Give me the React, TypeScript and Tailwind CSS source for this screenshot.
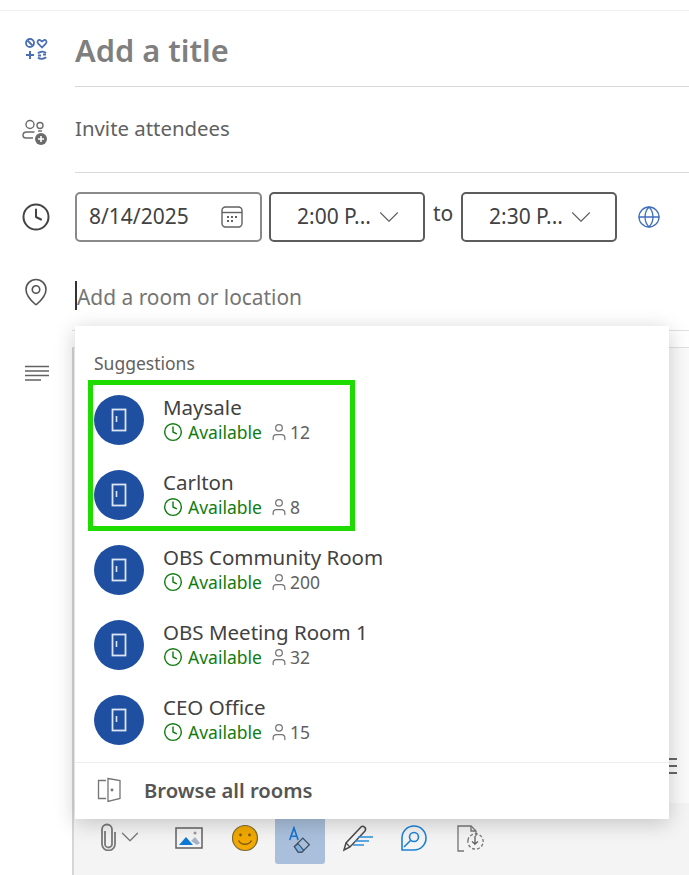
import { ChevronDown, Clock, Globe, MapPin, User } from 'lucide-react';

const rooms = [
  { name: 'Maysale', seats: 12 },
  { name: 'Carlton', seats: 8 },
  { name: 'OBS Community Room', seats: 200 },
  { name: 'OBS Meeting Room 1', seats: 32 },
  { name: 'CEO Office', seats: 15 },
];

function CategoryIcon() {
  return (
    <svg width="26" height="26" viewBox="0 0 26 26" fill="none" stroke="#4a6fb5" strokeWidth="1.8">
      <circle cx="7" cy="7" r="4" />
      <path d="M4.500 4.500l5 5" />
      <path d="M19 11.500l-4-4.200c-1.600-2 .8-4.500 2.600-2.800l1.400 1 1.400-1c1.800-1.700 4.200.8 2.600 2.800z" />
      <path d="M7 15v8M3 19h8" strokeWidth="2" />
      <path d="M15 17.500c1-2 6-2.500 8-.5M23 21c-1 2-6 2.500-8 .5" />
      <path d="M15 19.500h3M20 18.500h3" />
    </svg>
  );
}

function InviteIcon() {
  return (
    <svg width="30" height="30" viewBox="0 0 30 30" fill="none" stroke="#6b6b6b" strokeWidth="1.400">
      <circle cx="10" cy="7.500" r="4" />
      <circle cx="20" cy="8.500" r="3" />
      <path d="M13 21H6c-2 0-3-1.200-3-2.800C3 16 4.500 15 6.500 15h8" />
      <path d="M18 14h4" />
      <circle cx="21" cy="22" r="6" fill="#6b6b6b" stroke="none" />
      <path d="M21 19v6M18 22h6" stroke="#fff" strokeWidth="1.600" />
    </svg>
  );
}

function CalendarIcon() {
  return (
    <svg width="24" height="24" viewBox="0 0 24 24" fill="none" stroke="#616161" strokeWidth="1.400">
      <rect x="2" y="2" width="20" height="20" rx="3.500" />
      <path d="M2 7.500h20" />
      <path d="M7 12h2M11 12h2M15 12h2M7 16h2M11 16h2" strokeWidth="2" />
    </svg>
  );
}

function DoorIcon() {
  return (
    <svg width="16" height="24" viewBox="0 0 16 24" fill="none" stroke="#dbe6f5" strokeWidth="1.800">
      <rect x="1.500" y="1.500" width="13" height="21" />
      <path d="M5.500 8v6" strokeWidth="1.600" />
    </svg>
  );
}

function BrowseIcon() {
  return (
    <svg width="24" height="26" viewBox="0 0 24 26" fill="none" stroke="#757575" strokeWidth="1.300">
      <path d="M9 3.500H1.500v18H9" />
      <path d="M11 1.500l12 2v18l-12 3z" />
      <circle cx="15" cy="13" r="0.800" fill="#757575" />
    </svg>
  );
}

function LinesIcon() {
  return (
    <svg width="26" height="16" viewBox="0 0 26 16" stroke="#616161" strokeWidth="1.500">
      <path d="M1 1.500h24M1 6h24M1 10.500h24M1 15h16" />
    </svg>
  );
}

function ClipIcon() {
  return (
    <svg width="16" height="28" viewBox="0 0 16 28" fill="none" stroke="#7a7a7a" strokeWidth="1.800">
      <path d="M5 8v13a3.500 3.500 0 0 0 7 0V6.500a5 5 0 0 0-10 0V21a6.500 6.500 0 0 0 13 0V9" />
    </svg>
  );
}

function PictureIcon() {
  return (
    <svg width="28" height="24" viewBox="0 0 28 24" fill="none">
      <rect x="1" y="2" width="26" height="20" stroke="#616161" strokeWidth="1.500" />
      <path d="M4 19l7-8 7 8z" fill="#0f78d4" />
      <path d="M16 15l4-4 5 6-3 2z" fill="#a6b4c6" />
      <circle cx="20" cy="7" r="1.500" fill="#9a9a9a" />
    </svg>
  );
}

function SmileIcon() {
  return (
    <svg width="28" height="28" viewBox="0 0 28 28">
      <circle cx="14" cy="14" r="12.500" fill="#f2a900" stroke="#7d6a36" strokeWidth="1.200" />
      <circle cx="9.500" cy="11" r="1.400" fill="#7a5a10" />
      <circle cx="18.500" cy="11" r="1.400" fill="#7a5a10" />
      <path d="M7.500 16.500c2.500 5 10.500 5 13 0" fill="none" stroke="#7a5a10" strokeWidth="1.400" />
    </svg>
  );
}

function FormatIcon() {
  return (
    <svg width="26" height="28" viewBox="0 0 26 30" fill="none">
      <path d="M2 15L6.500 2 11 15M3.500 11h6" stroke="#1673d0" strokeWidth="1.700" />
      <path d="M7 22l9-9 7 7-8 8h-4z" stroke="#43505f" strokeWidth="1.400" />
      <path d="M7 22l4 6h4l2-2-6-7z" fill="#7fb2e5" stroke="#43505f" strokeWidth="1.200" />
    </svg>
  );
}

function PenIcon() {
  return (
    <svg width="32" height="28" viewBox="0 0 32 28" fill="none">
      <path d="M2 26l2-7L19 3c2-2 6 1 4 4L8 23z" stroke="#4a4a4a" strokeWidth="1.500" />
      <path d="M4 19l4 4" stroke="#4a4a4a" strokeWidth="1.300" />
      <path d="M16 13h15M13 17h14M11 21h11" stroke="#2b8fdc" strokeWidth="1.300" />
    </svg>
  );
}

function LoopIcon() {
  return (
    <svg width="28" height="28" viewBox="0 0 28 28" fill="none" stroke="#1b82d6" strokeWidth="1.600">
      <path d="M2 26V14A12 12 0 1 1 14 26z" />
      <circle cx="14" cy="13" r="4.500" />
      <path d="M10.500 16.500L4 23" />
    </svg>
  );
}

function SchedulerIcon() {
  return (
    <svg width="28" height="28" viewBox="0 0 28 28" fill="none" stroke="#757575" strokeWidth="1.300">
      <path d="M8 26H2V1h13l5 5v5" />
      <path d="M15 1v5h5" />
      <path d="M12 15a7.500 7.500 0 1 0 15 3 7.500 7.500 0 0 0-15-3" strokeDasharray="3 2" />
      <path d="M19 11v8l3-2.500M19 19l-3-2.500" stroke="#616161" />
    </svg>
  );
}

export default function App() {
  const sans = "font-['Noto_Sans',sans-serif]";
  return (
    <div className={`relative w-[689px] h-[875px] overflow-hidden bg-white ${sans}`}>
      <div className="h-[10px]" />
      <div className="h-px bg-[#f0f0f0]" />

      <div className="flex h-[76px]">
        <div className="w-[75px] flex-none flex justify-center pt-[25px] pr-[3px]">
          <CategoryIcon />
        </div>
        <div className="flex-1 border-b border-[#d8d8d8] pt-[16px]">
          <span className="text-[30.800px] leading-[46px] font-semibold text-[#7f7f7f]">Add a title</span>
        </div>
      </div>

      <div className="flex h-[86px]">
        <div className="w-[75px] flex-none flex justify-center pt-[30px] pr-[5px]">
          <InviteIcon />
        </div>
        <div className="flex-1 border-b border-[#d8d8d8] pt-[26px]">
          <span className="text-[20.400px] leading-[30px] text-[#616161]">Invite attendees</span>
        </div>
      </div>

      <div className="flex h-[90px] pt-[19px]">
        <div className="w-[75px] flex-none flex justify-center pt-[10px] pr-[3px]">
          <Clock size={30} strokeWidth={1.600} className="text-[#444444]" />
        </div>
        <div className="flex items-start">
          <div className="w-[187px] h-[50px] rounded-[5px] border-2 border-[#8a8a8a] flex items-center justify-between pl-[12px] pr-[16px]">
            <span className="text-[21px] text-[#424242]">8/14/2025</span>
            <CalendarIcon />
          </div>
          <div className="ml-[7px] w-[156px] h-[50px] rounded-[5px] border-2 border-[#5c5c5c] flex items-center pl-[26px] gap-px">
            <span className="text-[21px] text-[#424242]">2:00 P...</span>
            <ChevronDown size={34} strokeWidth={0.800} className="text-[#616161]" />
          </div>
          <span className="mx-[8px] w-[20px] pt-[5px] text-[21px] leading-[32px] text-[#424242]">to</span>
          <div className="w-[156px] h-[50px] rounded-[5px] border-2 border-[#5c5c5c] flex items-center pl-[26px] gap-px">
            <span className="text-[21px] text-[#424242]">2:30 P...</span>
            <ChevronDown size={34} strokeWidth={0.800} className="text-[#616161]" />
          </div>
          <Globe size={24} strokeWidth={1.300} className="ml-[20px] mt-[13px] text-[#3f6fbd]" />
        </div>
      </div>

      <div className="flex h-[70px]">
        <div className="w-[75px] flex-none flex justify-center pt-[14px] pr-[3px]">
          <MapPin size={30} strokeWidth={1.300} className="text-[#555555]" />
        </div>
        <div className="flex items-start pt-[18px]">
          <div className="w-[2px] h-[29px] bg-[#333333]" />
          <span className="mt-px text-[20.900px] leading-[30px] text-[#757575]">Add a room or location</span>
        </div>
      </div>

      <div className="absolute left-[24px] top-[365px]">
        <LinesIcon />
      </div>

      <div className="absolute left-[72px] right-0 top-[330px] bottom-0 flex flex-col">
        <div className="h-px bg-[#e0e0e0]" />
        <div className="h-[16px]" />
        <div className="h-px bg-[#e0e0e0]" />
        <div className="flex-1 flex flex-col border-l-2 border-[#d6d6d6]">
          <div className="flex-1 bg-[#fafafa] flex items-end justify-end pr-[12px] pb-[29px]">
            <div className="w-[20px] flex flex-col gap-[5px]">
              <div className="h-[2px] bg-[#666666]" />
              <div className="h-[2px] bg-[#666666]" />
              <div className="h-[2px] bg-[#666666]" />
            </div>
          </div>
          <div className="h-[72px] bg-[#f4f4f4] pt-[16px]">
            <div className="h-[45px] flex items-start pl-[26px]">
              <div className="mt-[4px]"><ClipIcon /></div>
              <ChevronDown size={30} strokeWidth={1} className="mt-[3px] -ml-px text-[#777777]" />
              <div className="ml-[30px] mt-[7px]"><PictureIcon /></div>
              <div className="ml-[28px] mt-[5px]"><SmileIcon /></div>
              <div className="ml-[16px] w-[50px] h-[45px] rounded-b-[3px] bg-[#a9bfdc] flex justify-center pt-[7px]">
                <FormatIcon />
              </div>
              <div className="ml-[17px] mt-[5px]"><PenIcon /></div>
              <div className="ml-[26px] mt-[5px]"><LoopIcon /></div>
              <div className="ml-[28px] mt-[6px]"><SchedulerIcon /></div>
            </div>
          </div>
        </div>
      </div>

      <div className="absolute left-[75px] top-[326px] w-[594px] h-[493px] bg-white shadow-[0_4px_20px_rgba(0,0,0,0.2)] flex flex-col">
        <div className="h-[56px] pl-[19px] pt-[25px] text-[17.500px] leading-[24px] text-[#616161]">Suggestions</div>
        {rooms.map((room) => (
          <div key={room.name} className="h-[75px] flex items-center pl-[19px]">
            <div className="w-[50px] h-[50px] rounded-full bg-[#1e4fa0] flex items-center justify-center">
              <DoorIcon />
            </div>
            <div className="ml-[19px] mb-[3px]">
              <div className="text-[20.500px] leading-[27px] text-[#424242]">{room.name}</div>
              <div className="flex items-center text-[17.500px] leading-[22px]">
                <Clock size={20} strokeWidth={1.700} className="text-[#107c10]" />
                <span className="ml-[5px] text-[#107c10]">Available</span>
                <User size={20} strokeWidth={1.500} className="ml-[7px] text-[#757575]" />
                <span className="ml-px text-[#616161]">{room.seats}</span>
              </div>
            </div>
          </div>
        ))}
        <div className="h-px mt-[5px] bg-[#ececec]" />
        <div className="flex-1 flex items-center pl-[22px] pb-[2px]">
          <BrowseIcon />
          <span className="ml-[23px] text-[20.200px] font-semibold text-[#555555]">Browse all rooms</span>
        </div>
        <div className="absolute left-[13px] top-[54px] w-[267px] h-[151px] border-[5px] border-[#1fdc00] pointer-events-none" />
      </div>
    </div>
  );
}
